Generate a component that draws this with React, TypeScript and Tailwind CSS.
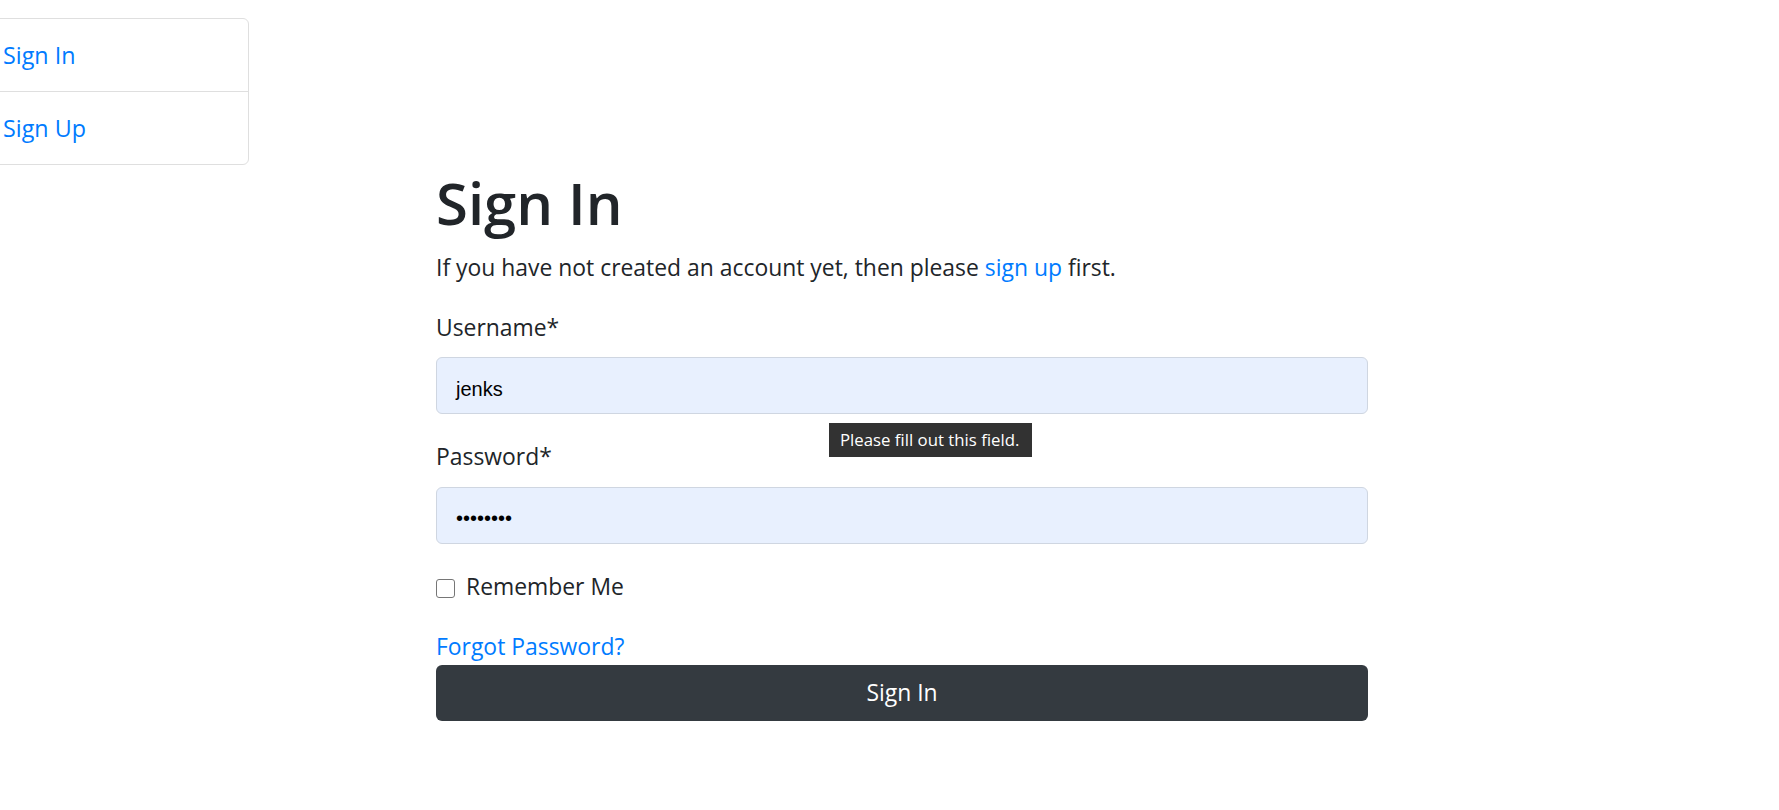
export default function App() {
  return (
    <div
      className="relative w-full h-[810px] overflow-hidden bg-white text-[#212529]"
      style={{ fontFamily: '"Open Sans", sans-serif' }}
    >
      <div className="flex flex-row items-start">
        {/* Sidebar list group */}
        <div className="ml-[-28px] mt-[18px] w-[277px] shrink-0 rounded-[6px] border border-[#dfdfdf] bg-white">
          <a className="block px-[30px] py-[18px] text-[23.3px] leading-[36px] text-[#007bff]" href="#">
            Sign In
          </a>
          <a
            className="block border-t border-[#dfdfdf] px-[30px] py-[18px] text-[23.3px] leading-[36px] text-[#007bff]"
            href="#"
          >
            Sign Up
          </a>
        </div>

        {/* Main content */}
        <div className="ml-[187px] w-[932px] shrink-0 pt-[167px]">
          <h1 className="mb-[11px] text-[58px] font-semibold leading-[72px]">Sign In</h1>
          <p className="mb-[24px] text-[22.9px] leading-[36px]">
            If you have not created an account yet, then please{" "}
            <a className="text-[#007bff]" href="#">
              sign up
            </a>{" "}
            first.
          </p>

          <form className="flex flex-col">
            <div className="mb-[25px] flex flex-col">
              <label className="mb-[11px] text-[22.9px] leading-[36px]">Username*</label>
              <div className="flex h-[57px] items-center rounded-[6px] border border-[#cfd6e1] bg-[#e8f0fe] px-[19px]">
                <span
                  className="mt-[6px] text-[20px] leading-[24px] text-black"
                  style={{ fontFamily: '"Liberation Sans", Arial, sans-serif' }}
                >
                  jenks
                </span>
              </div>
            </div>

            <div className="mb-[25px] flex flex-col">
              <label className="mb-[12px] text-[22.9px] leading-[36px]">Password*</label>
              <div className="flex h-[57px] items-center rounded-[6px] border border-[#cfd6e1] bg-[#e8f0fe] px-[19px]">
                <span
                  className="mt-[4px] text-[20px] leading-[24px] text-black"
                  style={{ fontFamily: '"Liberation Sans", Arial, sans-serif' }}
                >
                  ••••••••
                </span>
              </div>
            </div>

            <div className="mb-[24px] flex h-[36px] flex-row items-center">
              <span className="mt-[2px] h-[19px] w-[19px] shrink-0 rounded-[3px] border-[1.5px] border-[#767676] bg-white" />
              <span className="ml-[11px] text-[22.9px] leading-[36px]">Remember Me</span>
            </div>

            <a className="text-[22.9px] leading-[36px] text-[#007bff]" href="#">
              Forgot Password?
            </a>

            <button
              type="button"
              className="flex h-[56px] w-full items-center justify-center rounded-[6px] bg-[#343a40] text-[22.9px] leading-[36px] text-white"
            >
              Sign In
            </button>
          </form>
        </div>
      </div>

      {/* Validation tooltip overlay */}
      <div className="absolute left-[829px] top-[423px] flex h-[34px] w-[203px] items-center bg-[#323232] pl-[11px]">
        <span className="whitespace-nowrap text-[16.8px] leading-[20px] text-white">Please fill out this field.</span>
      </div>
    </div>
  );
}
